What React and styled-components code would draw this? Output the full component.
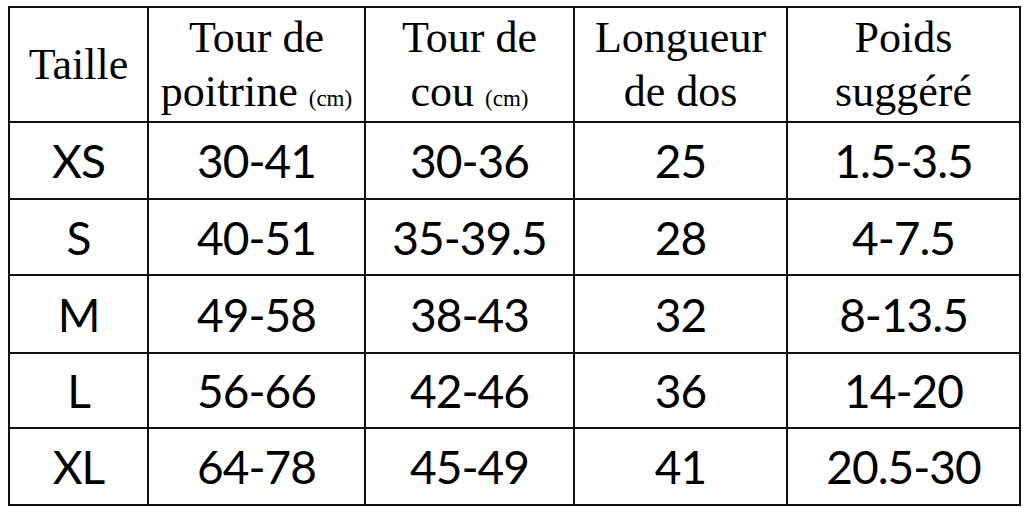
import React from "react";
import styled, { createGlobalStyle } from "styled-components";

const GlobalStyle = createGlobalStyle`
  html, body {
    margin: 0;
    padding: 0;
    background: #ffffff;
  }
  body {
    padding: 6px 5px 0 8px;
  }
`;

const Table = styled.table`
  width: 1011px;
  border-collapse: collapse;
  table-layout: fixed;
  color: #000;
  border: 2px solid #111;
`;

const HeadCell = styled.th`
  border: 2px solid #111;
  height: 113px;
  padding: 0;
  font-family: "Liberation Serif", "Times New Roman", serif;
  font-weight: normal;
  font-size: 44px;
  line-height: 54px;
  text-align: center;
  vertical-align: middle;
`;

const Unit = styled.span`
  font-size: 23px;
  line-height: 1;
`;

const Cell = styled.td`
  border: 2px solid #111;
  height: ${(p) => p.$h}px;
  padding: 0;
  font-family: Lato, "Liberation Sans", sans-serif;
  font-size: 46px;
  letter-spacing: -1px;
  text-align: center;
  vertical-align: middle;
`;

const columns = [139, 217, 209, 213, 233];

const rows = [
  { h: 75, cells: ["XS", "30-41", "30-36", "25", "1.5-3.5"] },
  { h: 74, cells: ["S", "40-51", "35-39.5", "28", "4-7.5"] },
  { h: 76, cells: ["M", "49-58", "38-43", "32", "8-13.5"] },
  { h: 73, cells: ["L", "56-66", "42-46", "36", "14-20"] },
  { h: 75, cells: ["XL", "64-78", "45-49", "41", "20.5-30"] },
];

export default function App() {
  return (
    <>
      <GlobalStyle />
      <Table>
        <colgroup>
          {columns.map((w, i) => (
            <col key={i} style={{ width: w }} />
          ))}
        </colgroup>
        <thead>
          <tr>
            <HeadCell>Taille</HeadCell>
            <HeadCell>
              Tour de
              <br />
              poitrine <Unit>(cm)</Unit>
            </HeadCell>
            <HeadCell>
              Tour de
              <br />
              cou <Unit>(cm)</Unit>
            </HeadCell>
            <HeadCell>
              Longueur
              <br />
              de dos
            </HeadCell>
            <HeadCell>
              Poids
              <br />
              suggéré
            </HeadCell>
          </tr>
        </thead>
        <tbody>
          {rows.map((r) => (
            <tr key={r.cells[0]}>
              {r.cells.map((c, i) => (
                <Cell key={i} $h={r.h}>
                  {c}
                </Cell>
              ))}
            </tr>
          ))}
        </tbody>
      </Table>
    </>
  );
}
